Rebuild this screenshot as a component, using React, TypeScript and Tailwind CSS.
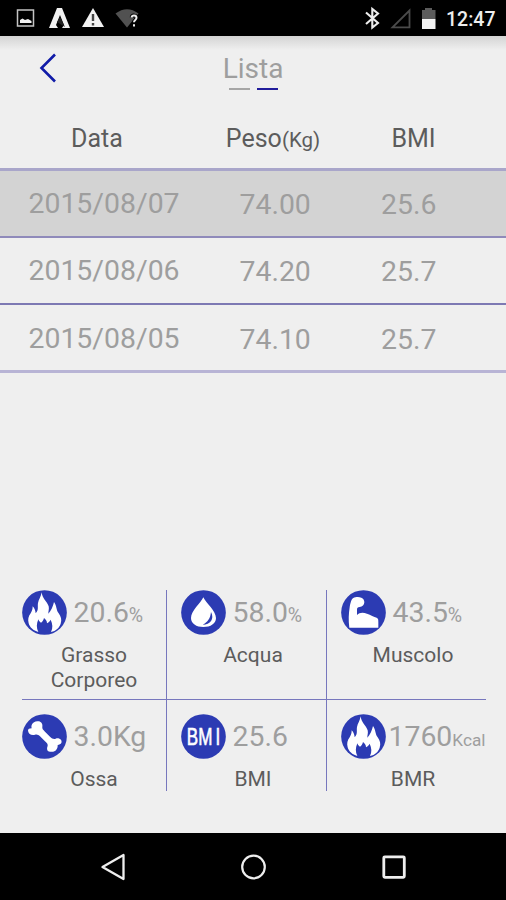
import type { ReactNode } from 'react';

const rows = [
  { date: '2015/08/07', weight: '74.00', bmi: '25.6', style: 'h-[67px] bg-[#d3d3d3] border-b-2 border-[#8f8aba]' },
  { date: '2015/08/06', weight: '74.20', bmi: '25.7', style: 'h-[67px] border-b-2 border-[#7d79b3]' },
  { date: '2015/08/05', weight: '74.10', bmi: '25.7', style: 'h-[68px] pt-[2px] border-b-[3px] border-[#b8b4d5]' },
];

function Disc({ children }: { children: ReactNode }) {
  return (
    <svg className="h-[45px] w-[45px] shrink-0" viewBox="0 0 135 135">
      <circle cx="67.5" cy="67.5" r="67" fill="#2c3bb3" />
      {children}
    </svg>
  );
}

function Flame() {
  return (
    <Disc>
      <path
        fill="#fff"
        d="M59 7C60 25 75 34 80 49C82 57 79 64 79 71C87 62 93 50 96 36C105 48 102 60 110 70C117 80 120 89 116 101C112 113 102 123 87 126C93 114 92 102 86 89C83 95 79 98 75 100C75 93 72 89 66 84C64 92 61 96 57 98C53 96 51 93 49 88C43 102 43 114 49 126C34 122 23 112 20 100C17 88 19 79 26 70C30 63 32 57 32 49C38 55 40 62 41 70C51 59 46 50 48 39C50 28 57 21 59 7Z"
      />
    </Disc>
  );
}

function Drop() {
  return (
    <Disc>
      <path fill="#fff" d="M67 22C75 39 105 63 105 84C105 101 89 111 67 111C46 111 30 101 30 84C30 63 59 39 67 22Z" />
      <path fill="#2c3bb3" d="M90 66C101 87 88 104 65 104C80 96 88 86 90 66Z" />
    </Disc>
  );
}

function Arm() {
  return (
    <Disc>
      <path
        fill="#fff"
        d="M37 24C43 21 53 20 61 23C67 25 70 31 70 37C70 45 64 51 56 51C50 51 48 54 48 59V75C56 67 66 67 78 71C89 75 99 80 107 83C112 85 112 89 112 96V113H25C22 90 23 72 26 52C28 40 31 27 37 24Z"
      />
    </Disc>
  );
}

function Bone() {
  return (
    <Disc>
      <path
        fill="#fff"
        d="M46 22C55 20 63 28 61 38C60 43 63 47 69 53L84 68C90 74 95 76 101 74C111 70 122 78 118 87C116 91 112 92 107 93C108 103 101 113 93 113H84C76 113 73 105 77 96C78 91 75 87 69 82L54 67C49 62 45 60 39 62C29 65 19 60 18 50C18 45 22 43 29 43C27 34 30 24 46 22Z"
      />
    </Disc>
  );
}

function BmiMark() {
  return (
    <Disc>
      <text
        transform="translate(17 93) scale(.7 1)"
        fill="#fff"
        stroke="#fff"
        strokeWidth="2"
        fontSize="73"
        className="font-['Liberation_Sans',sans-serif]"
      >
        <tspan x="0">B</tspan>
        <tspan x="50">M</tspan>
        <tspan x="124">I</tspan>
      </text>
    </Disc>
  );
}

interface MetricProps {
  icon: ReactNode;
  value: string;
  unit?: string;
  unitSize?: string;
  label: ReactNode;
  gap: string;
  frame: string;
}

function Metric({ icon, value, unit, unitSize = 'text-[19.5px]', label, gap, frame }: MetricProps) {
  return (
    <div className={`flex flex-col ${frame}`}>
      <div className={`flex h-[45px] items-center ${gap}`}>
        {icon}
        <div className="flex items-baseline whitespace-nowrap text-[28.4px] leading-[45px] text-[#9e9e9e]">
          {value}
          {unit && <span className={`leading-none ${unitSize}`}>{unit}</span>}
        </div>
      </div>
      <div className="mt-[8px] w-[145px] text-center text-[21px] leading-[25px] text-[#5c5c5c]">{label}</div>
    </div>
  );
}

function StatusBar() {
  return (
    <header className="flex h-[36px] items-center bg-black">
      <svg className="h-[36px] w-[150px]" viewBox="0 0 150 36">
        <rect x="17.5" y="10" width="16" height="16" fill="none" stroke="#c4c4c4" strokeWidth="1.5" />
        <path d="M20 23V20L22.5 18.5L25 20L28 19L31.5 21V23Z" fill="#f4f4f4" />
        <path d="M57 8H62L70 28H62L64 25L60 15L56 25L58 28H49Z" fill="#f2f2f2" />
        <path d="M60 17L65 27L57 22Z" fill="#222" />
        <path d="M93 8L104 27H82Z" fill="#f2f2f2" />
        <path d="M93 14V21M93 23V25.5" stroke="#444" strokeWidth="2.4" />
        <path d="M115.5 13.5Q127 5 138.5 13.5L127 27.5Z" fill="#515151" />
        <path
          d="M131.5 17.5C132 14.5 136.7 14.8 136.5 18C136.3 20 134 20 134 22.3M134 24.2V26.5"
          fill="none"
          stroke="#000"
          strokeWidth="3.6"
        />
        <path
          d="M131.5 17.5C132 14.5 136.7 14.8 136.5 18C136.3 20 134 20 134 22.3M134 24.2V26.5"
          fill="none"
          stroke="#eee"
          strokeWidth="2"
        />
      </svg>
      <svg className="ml-auto h-[36px] w-[86px]" viewBox="360 0 86 36">
        <path d="M366 12.5L378 23L372.3 27.5V9L378 13.5L366 24" fill="none" stroke="#eee" strokeWidth="2.1" />
        <path d="M392.5 27.3H409.5V10.5Z" fill="none" stroke="#4b4b4b" strokeWidth="1.8" />
        <path d="M422 10H425V8H432V10H435.5V19H422Z" fill="#5c5c5c" />
        <path d="M422 19H435.5V29H422Z" fill="#f3f3f3" />
      </svg>
      <span className="w-[60px] pt-[3px] text-[19.5px] font-medium leading-[33px] text-[#eee]">12:47</span>
    </header>
  );
}

export default function App() {
  return (
    <div className="flex h-[900px] w-[506px] flex-col overflow-hidden bg-[#efefef] font-['Roboto',sans-serif]">
      <StatusBar />
      <div className="h-[14px] bg-linear-to-b from-[#d4d4d4] to-[#efefef]" />
      <div className="grid h-[44px] grid-cols-[1fr_60px_1fr]">
        <svg className="ml-[38px] h-[34px] w-[20px]" viewBox="38 50 20 34">
          <path d="M55 54.5L41.5 68L55 81.5" fill="none" stroke="#101ba8" strokeWidth="2.6" />
        </svg>
        <div className="flex flex-col items-center">
          <h1 className="h-[38px] text-[28px] leading-[37px] text-[#9e9e9e]">Lista</h1>
          <div className="flex gap-[7px]">
            <i className="h-[2px] w-[21px] bg-[#a6a6a6]" />
            <i className="h-[2px] w-[21px] bg-[#211c9b]" />
          </div>
        </div>
      </div>
      <div className="flex h-[77px] border-b-[3px] border-[#a9a6ca] pt-[26px] text-[25px] leading-[38px] text-[#5c5c5c]">
        <div className="w-[194px] text-center">Data</div>
        <div className="w-[158px] text-center">
          Peso<span className="text-[20.5px]">(Kg)</span>
        </div>
        <div className="w-[123px] text-center">BMI</div>
      </div>
      {rows.map((r) => (
        <div key={r.date} className={`flex items-center text-[28.4px] leading-[60px] text-[#9e9e9e] ${r.style}`}>
          <div className="w-[239.5px] pt-[1px] pl-[28.5px]">{r.date}</div>
          <div className="w-[141.5px] pt-[3px]">{r.weight}</div>
          <div className="pt-[3px]">{r.bmi}</div>
        </div>
      ))}
      <div className="ml-[21.5px] mt-[217px] grid w-[464px] grid-cols-[145px_160px_159px] grid-rows-[110px_91px]">
        <Metric icon={<Flame />} value="20.6" unit="%" label={<>Grasso<br />Corporeo</>} gap="gap-[7px]" frame="border-b border-r border-[#7777bd]" />
        <Metric icon={<Drop />} value="58.0" unit="%" label="Acqua" gap="gap-[7px]" frame="pl-[14px] border-b border-r border-[#7777bd]" />
        <Metric icon={<Arm />} value="43.5" unit="%" label="Muscolo" gap="gap-[7px]" frame="pl-[14px] border-b border-[#7777bd]" />
        <Metric icon={<Bone />} value="3.0Kg" label="Ossa" gap="gap-[7px]" frame="pt-[14px] border-r border-[#7777bd]" />
        <Metric icon={<BmiMark />} value="25.6" label="BMI" gap="gap-[7px]" frame="pl-[14px] pt-[14px] border-r border-[#7777bd]" />
        <Metric icon={<Flame />} value="1760" unit="Kcal" unitSize="text-[17.2px]" label="BMR" gap="gap-[3px]" frame="pl-[14px] pt-[14px]" />
      </div>
      <nav className="mt-auto flex h-[67px] items-center justify-between bg-black px-[99px]">
        <svg className="h-[30px] w-[28px]" viewBox="0 0 28 30" fill="none" stroke="#eee" strokeWidth="2.3">
          <path d="M24.5 3V27L3.5 15Z" strokeLinejoin="round" />
        </svg>
        <svg className="h-[30px] w-[28px]" viewBox="0 0 28 30" fill="none" stroke="#eee" strokeWidth="2.2">
          <circle cx="14.5" cy="15" r="11.3" />
        </svg>
        <svg className="h-[30px] w-[28px]" viewBox="0 0 28 30" fill="none" stroke="#eee" strokeWidth="2.8">
          <rect x="4.8" y="4.8" width="20.5" height="20.5" rx="1" />
        </svg>
      </nav>
    </div>
  );
}
